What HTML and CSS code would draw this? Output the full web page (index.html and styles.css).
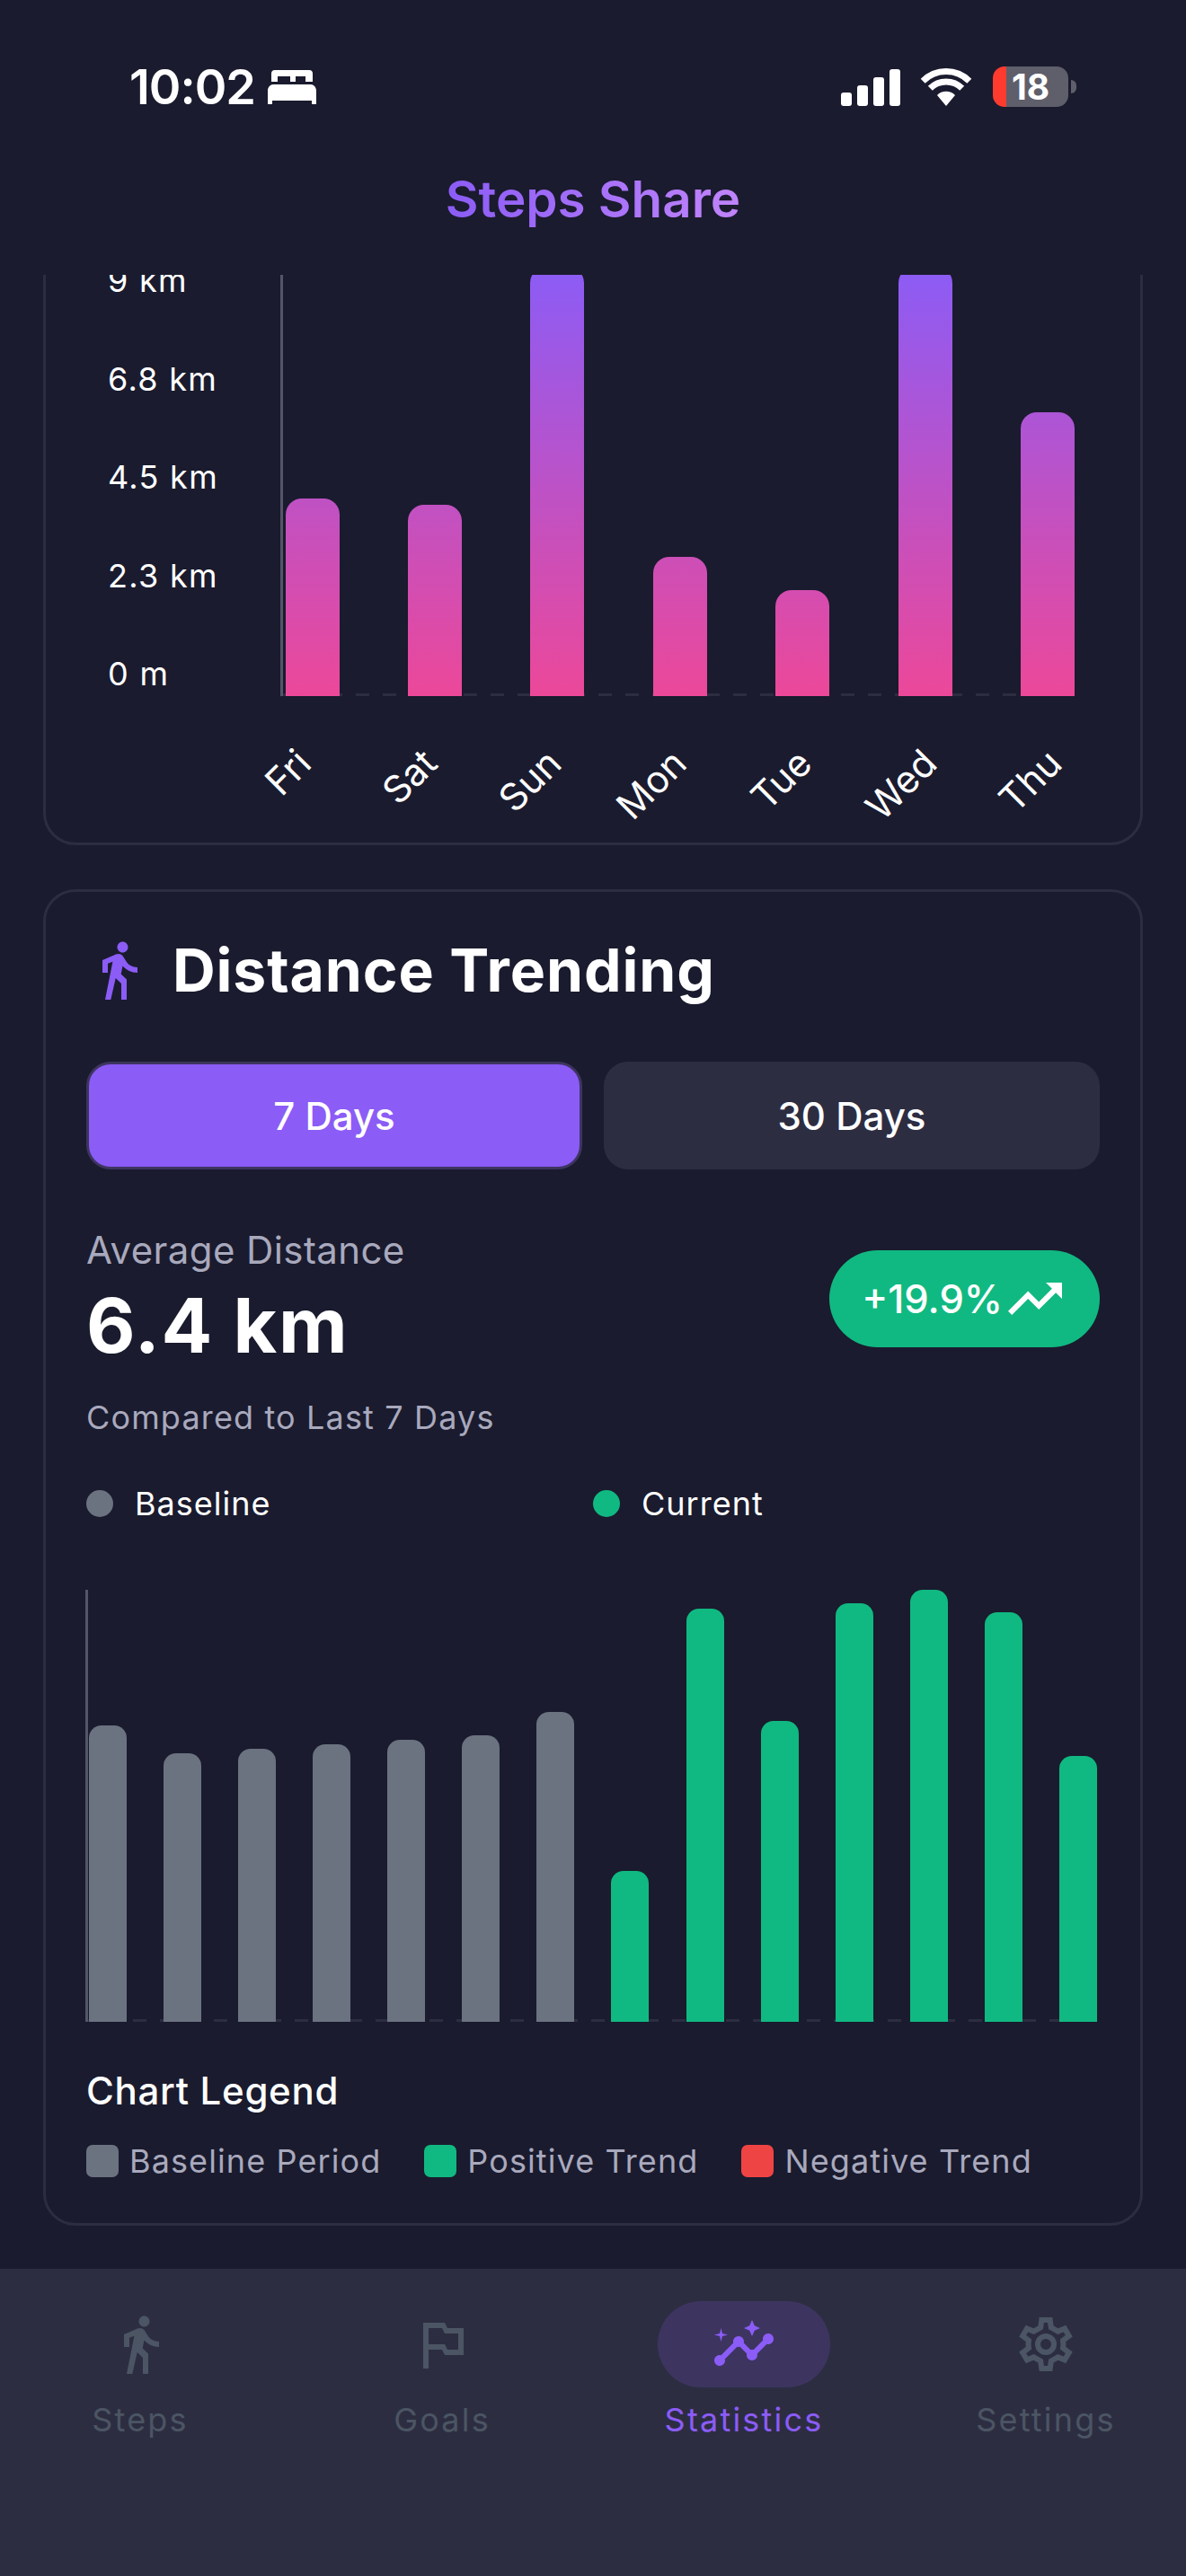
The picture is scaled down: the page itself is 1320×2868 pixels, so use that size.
FILE: index.html
```html
<!DOCTYPE html>
<html lang="en">
<head>
    <meta charset="UTF-8">
    <meta name="viewport" content="width=device-width, initial-scale=1.0">
    <title>Steps Share</title>
    <link rel="stylesheet" href="styles.css">
</head>
<body>
    <header class="top">
        <div class="status-bar">
            <div class="status-left">
                <span class="time">10:02</span>
                <svg class="bed" viewBox="0 0 54 38" fill="#fff"><path d="M8 0h38a4 4 0 0 1 4 4v9h-8V7H31v6h-6V7H11v6H4V4a4 4 0 0 1 4-4z"/><path d="M6 16h42c3 0 6 3 6 7v15h-5v-4H5v4H0V23c0-4 3-7 6-7z"/></svg>
            </div>
            <div class="status-right">
                <div class="signal">
                    <span class="sig sig-1"></span>
                    <span class="sig sig-2"></span>
                    <span class="sig sig-3"></span>
                    <span class="sig sig-4"></span>
                </div>
                <svg class="wifi" viewBox="0 0 58 42" fill="none" stroke="#fff" stroke-width="7"><path d="M3.2 14.2A36.5 36.5 0 0 1 54.8 14.2"/><path d="M11.3 22.3A25 25 0 0 1 46.7 22.3"/><path d="M29 42L19 30A14 14 0 0 1 39 30Z" fill="#fff" stroke="none"/></svg>
                <div class="battery-wrap">
                    <div class="battery">18</div>
                    <span class="battery-cap"></span>
                </div>
            </div>
        </div>
        <h1 class="page-title"><span>Steps Share</span></h1>
    </header>

    <main class="content">
        <section class="card card-scrolled">
            <div class="chart-row">
                <div class="y-axis">
                    <span>9 km</span>
                    <span>6.8 km</span>
                    <span>4.5 km</span>
                    <span>2.3 km</span>
                    <span>0 m</span>
                </div>
                <div class="plot plot-week">
                    <div class="bar bar-grad" style="height:220px"></div>
                    <div class="bar bar-grad" style="height:213px"></div>
                    <div class="bar bar-grad" style="height:478px"></div>
                    <div class="bar bar-grad" style="height:155px"></div>
                    <div class="bar bar-grad" style="height:118px"></div>
                    <div class="bar bar-grad" style="height:478px"></div>
                    <div class="bar bar-grad" style="height:316px"></div>
                </div>
            </div>
            <div class="x-axis">
                <div class="x-label"><span>Fri</span></div>
                <div class="x-label"><span>Sat</span></div>
                <div class="x-label"><span>Sun</span></div>
                <div class="x-label"><span>Mon</span></div>
                <div class="x-label"><span>Tue</span></div>
                <div class="x-label"><span>Wed</span></div>
                <div class="x-label"><span>Thu</span></div>
            </div>
        </section>

        <section class="card card-trend">
            <div class="card-head">
                <svg class="icon" viewBox="0 0 24 24" fill="#8b5cf6"><use href="#walk"/></svg>
                <h2>Distance Trending</h2>
            </div>

            <div class="toggle">
                <button class="toggle-btn active">7 Days</button>
                <button class="toggle-btn">30 Days</button>
            </div>

            <div class="stats">
                <div>
                    <div class="stat-label">Average Distance</div>
                    <div class="stat-value">6.4 km</div>
                    <div class="stat-note">Compared to Last 7 Days</div>
                </div>
                <div class="badge">
                    <span>+19.9%</span>
                    <svg class="icon" viewBox="0 0 24 24" fill="#fff"><path d="M16 6l2.29 2.29-4.88 4.88-4-4L2 16.59 3.41 18l6-6 4 4 6.3-6.29L22 12V6z"/></svg>
                </div>
            </div>

            <div class="series">
                <div class="series-item"><span class="dot dot-grey"></span>Baseline</div>
                <div class="series-item"><span class="dot dot-green"></span>Current</div>
            </div>

            <div class="plot plot-trend">
                <div class="bar bar-thin grey" style="height:330px"></div>
                <div class="bar bar-thin grey" style="height:299px"></div>
                <div class="bar bar-thin grey" style="height:304px"></div>
                <div class="bar bar-thin grey" style="height:309px"></div>
                <div class="bar bar-thin grey" style="height:314px"></div>
                <div class="bar bar-thin grey" style="height:319px"></div>
                <div class="bar bar-thin grey" style="height:345px"></div>
                <div class="bar bar-thin green" style="height:168px"></div>
                <div class="bar bar-thin green" style="height:460px"></div>
                <div class="bar bar-thin green" style="height:335px"></div>
                <div class="bar bar-thin green" style="height:466px"></div>
                <div class="bar bar-thin green" style="height:481px"></div>
                <div class="bar bar-thin green" style="height:456px"></div>
                <div class="bar bar-thin green" style="height:296px"></div>
            </div>

            <h3 class="legend-title">Chart Legend</h3>
            <div class="legend">
                <div class="legend-item"><span class="swatch grey"></span>Baseline Period</div>
                <div class="legend-item"><span class="swatch green"></span>Positive Trend</div>
                <div class="legend-item"><span class="swatch red"></span>Negative Trend</div>
            </div>
        </section>
    </main>

    <nav class="tabs">
        <div class="tab">
            <div class="tab-icon">
                <svg class="icon" viewBox="0 0 24 24"><use href="#walk"/></svg>
            </div>
            <span>Steps</span>
        </div>
        <div class="tab">
            <div class="tab-icon">
                <svg class="icon" viewBox="0 0 24 24"><path d="M14 6l-1-2H5v17h2v-7h5l1 2h7V6h-6zm4 8h-4l-1-2H7V6h5l1 2h5v6z"/></svg>
            </div>
            <span>Goals</span>
        </div>
        <div class="tab active">
            <div class="tab-icon">
                <svg class="icon" viewBox="0 0 24 24"><path d="M21 8c-1.45 0-2.26 1.44-1.93 2.51l-3.55 3.56c-.3-.09-.74-.09-1.04 0l-2.55-2.55C12.27 10.45 11.46 9 10 9c-1.45 0-2.27 1.44-1.93 2.52l-4.56 4.55C2.44 15.74 1 16.55 1 18c0 1.1.9 2 2 2 1.45 0 2.26-1.44 1.93-2.51l4.55-4.56c.3.09.74.09 1.04 0l2.55 2.55C12.73 16.55 13.54 18 15 18c1.45 0 2.27-1.44 1.93-2.52l3.56-3.55c1.07.33 2.51-.48 2.51-1.93 0-1.1-.9-2-2-2z"/><polygon points="15 9 15.94 6.93 18 6 15.94 5.07 15 3 14.08 5.07 12 6 14.08 6.93"/><polygon points="3.5 11 4 9 6 8.5 4 8 3.5 6 3 8 1 8.5 3 9"/></svg>
            </div>
            <span>Statistics</span>
        </div>
        <div class="tab">
            <div class="tab-icon">
                <svg class="icon gear" viewBox="0 0 24 24"><polygon points="13.57 3 13.95 5.75 16.5 7.2 19 6.2 20.6 8.9 18.35 10.6 18.5 12 18.35 13.4 20.6 15.1 19 17.8 16.5 16.8 13.95 18.25 13.57 21 10.43 21 10.05 18.25 7.5 16.8 5 17.8 3.4 15.1 5.65 13.4 5.5 12 5.65 10.6 3.4 8.9 5 6.2 7.5 7.2 10.05 5.75 10.43 3"/><circle cx="12" cy="12" r="3"/></svg>
            </div>
            <span>Settings</span>
        </div>
    </nav>

    <!-- shared walking figure -->
    <svg class="defs" width="0" height="0"><defs><path id="walk" d="M13.5 5.5c1.1 0 2-.9 2-2s-.9-2-2-2-2 .9-2 2 .9 2 2 2zM9.8 8.9L7 23h2.1l1.8-8 2.1 2v6h2v-7.5l-2.1-2 .6-3C14.8 12 16.8 13 19 13v-2c-1.9 0-3.5-1-4.3-2.4l-1-1.6c-.4-.6-1-1-1.7-1-.3 0-.5.1-.8.1L6 8.3V13h2V9.6l1.8-.7"/></defs></svg>
</body>
</html>
```

FILE: styles.css
```css
* {
    box-sizing: border-box;
}
body {
    margin: 0;
    width: 1320px;
    height: 2868px;
    overflow: hidden;
    display: flex;
    flex-direction: column;
    background-color: #1a1b2e;
    color: #fff;
    font-family: Inter, "Noto Sans", sans-serif;
}
.defs {
    position: absolute;
}
.icon {
    display: block;
    width: 72px;
    height: 72px;
    flex: none;
}

/* status bar + title */
.top {
    height: 306px;
    flex: none;
}
.status-bar {
    height: 45px;
    margin-top: 74px;
    padding: 0 122px 0 144px;
    display: flex;
    justify-content: space-between;
    align-items: center;
}
.status-left {
    display: flex;
    align-items: center;
    gap: 14px;
}
.time {
    font-size: 54px;
    font-weight: 600;
    line-height: 45px;
    letter-spacing: -1px;
}
.bed {
    width: 54px;
    height: 38px;
}
.status-right {
    display: flex;
    align-items: center;
}
.signal {
    display: flex;
    align-items: flex-end;
    gap: 6px;
    height: 41px;
    margin-top: 1px;
}
.sig {
    width: 12px;
    background-color: #fff;
    border-radius: 3px;
}
.sig-1 { height: 15px; }
.sig-2 { height: 23px; }
.sig-3 { height: 32px; }
.sig-4 { height: 41px; }
.wifi {
    width: 58px;
    height: 42px;
    margin-left: 22px;
}
.battery-wrap {
    display: flex;
    align-items: center;
    margin-left: 23px;
}
.battery {
    width: 84px;
    height: 45px;
    border-radius: 13px;
    background: linear-gradient(90deg, #ff3b30 15px, #5f5f6b 15px);
    font-size: 39px;
    font-weight: 700;
    line-height: 45px;
    text-align: center;
}
.battery-cap {
    width: 6px;
    height: 15px;
    margin-left: 3px;
    border-radius: 0 6px 6px 0;
    background-color: #5f5f6b;
}
.page-title {
    margin: 70px 0 0;
    font-size: 56.5px;
    font-weight: 600;
    line-height: 66px;
    text-align: center;
}
.page-title span {
    background: linear-gradient(90deg, #8b5cf6, #c084fc);
    -webkit-background-clip: text;
    background-clip: text;
    color: transparent;
}

/* scroll area */
.content {
    flex: 1;
    min-height: 0;
    overflow: hidden;
    padding: 0 48px;
}
.card {
    border: 3px solid #2d2d42;
    border-radius: 36px;
}
.card-scrolled {
    margin-top: -60px;
    padding: 9px 73px 71px 69px;
}
.chart-row {
    display: flex;
    height: 517px;
}
.y-axis {
    width: 191.5px;
    flex: none;
    font-size: 36px;
    letter-spacing: 1.3px;
}
.y-axis span {
    display: block;
    height: 109.5px;
    line-height: 109.5px;
}
.plot {
    display: flex;
    justify-content: space-between;
    align-items: flex-end;
    border-left: 3px solid #55556a;
    background-image: linear-gradient(90deg, #2d2d42 15px, transparent 15px);
    background-size: 30px 3px;
    background-repeat: repeat-x;
}
.plot-week {
    flex: 1;
    padding-left: 3px;
    background-position: 21px bottom;
}
.bar {
    width: 60px;
    border-radius: 18px 18px 0 0;
}
.bar-grad {
    background-image: linear-gradient(180deg, #8b5cf6, #ec4899);
    background-size: 100% 478px;
    background-position: bottom;
    background-repeat: no-repeat;
}
.x-axis {
    display: flex;
    margin: 42px 0 0 79.5px;
}
.x-label {
    width: 139.2px;
    flex: none;
    font-size: 42px;
    line-height: 50px;
    text-align: right;
}
.x-label span {
    display: inline-block;
    transform: rotate(-45deg);
    transform-origin: right center;
}

/* trending card */
.card-trend {
    margin-top: 49px;
    padding: 51px 45px 47px;
}
.card-head {
    display: flex;
    align-items: center;
    gap: 24px;
}
.card-head h2 {
    margin: 0;
    font-size: 66px;
    font-weight: 700;
    line-height: 72px;
    letter-spacing: 0.9px;
}
.toggle {
    display: flex;
    gap: 24px;
    margin-top: 66px;
}
.toggle-btn {
    flex: 1;
    height: 120px;
    border: 3px solid transparent;
    border-radius: 27px;
    background-color: #2d2d42;
    color: #fff;
    font-family: inherit;
    font-size: 42px;
    font-weight: 500;
}
.toggle-btn.active {
    border-color: #3d3560;
    background-color: #8b5cf6;
}
.stats {
    display: flex;
    justify-content: space-between;
    align-items: flex-start;
    margin-top: 65px;
}
.stat-label {
    color: #a9a9bd;
    font-size: 42px;
    line-height: 50px;
    letter-spacing: 0.4px;
}
.stat-value {
    margin-top: 9px;
    font-size: 84px;
    font-weight: 700;
    line-height: 100px;
    letter-spacing: 1.7px;
}
.stat-note {
    margin-top: 30px;
    color: #a9a9bd;
    font-size: 36px;
    line-height: 44px;
    letter-spacing: 1.15px;
}
.badge {
    display: flex;
    align-items: center;
    height: 108px;
    margin-top: 25px;
    padding: 0 36px;
    border-radius: 54px;
    background-color: #10b981;
    font-size: 43.5px;
    font-weight: 500;
}
.series {
    display: grid;
    grid-template-columns: 1fr 1fr;
    margin-top: 52px;
}
.series-item {
    display: flex;
    align-items: center;
    gap: 24px;
    font-size: 36px;
    line-height: 44px;
    letter-spacing: 1px;
}
.dot {
    width: 30px;
    height: 30px;
    border-radius: 50%;
}
.dot-grey { background-color: #6b7280; }
.dot-green { background-color: #10b981; }
.plot-trend {
    height: 481px;
    margin: 74px 0 0 -1px;
    padding: 0 3px 0 1px;
    background-position: 20px bottom;
}
.bar-thin {
    width: 42px;
    border-radius: 14px 14px 0 0;
}
.grey { background-color: #6b7280; }
.green { background-color: #10b981; }
.red { background-color: #ef4444; }
.legend-title {
    margin: 52px 0 0;
    font-size: 42px;
    font-weight: 500;
    line-height: 50px;
    letter-spacing: 0.7px;
}
.legend {
    display: flex;
    gap: 48px;
    margin-top: 31px;
}
.legend-item {
    display: flex;
    align-items: center;
    gap: 12px;
    color: #a9a9bd;
    font-size: 36px;
    line-height: 44px;
    letter-spacing: 1.1px;
}
.swatch {
    width: 36px;
    height: 36px;
    border-radius: 7px;
}

/* bottom tabs */
.tabs {
    height: 342px;
    flex: none;
    display: grid;
    grid-template-columns: repeat(4, 336px);
    justify-content: center;
    padding-top: 36px;
    background-color: #2d2d42;
}
.tab {
    display: flex;
    flex-direction: column;
    align-items: center;
    color: #4b5563;
    fill: #4b5563;
    font-size: 36px;
    line-height: 44px;
    letter-spacing: 2.2px;
}
.tab-icon {
    width: 192px;
    height: 96px;
    margin-bottom: 14px;
    display: flex;
    justify-content: center;
    align-items: center;
    border-radius: 48px;
}
.tab.active {
    color: #8b5cf6;
    fill: #8b5cf6;
}
.tab.active .tab-icon {
    background-color: #3d3560;
}
.gear {
    fill: none;
    stroke: #4b5563;
    stroke-width: 2;
}
```
